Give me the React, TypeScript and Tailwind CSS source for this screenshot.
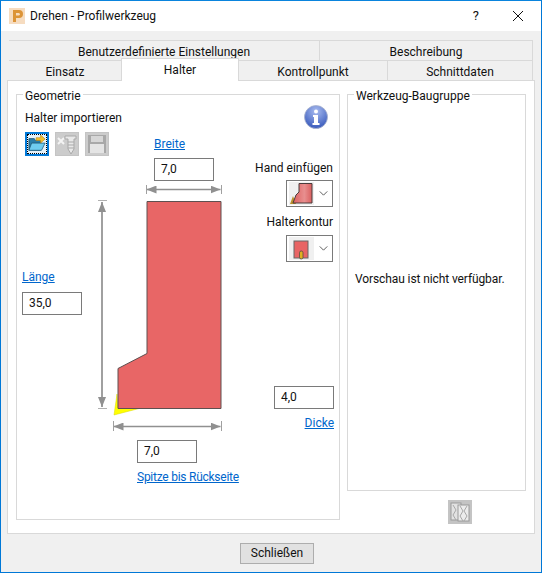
const font = { fontFamily: 'Roboto, "Noto Sans", sans-serif' };

const Tab = ({ label, className }: { label: string; className: string }) => (
  <div className={`flex items-center justify-center border-t border-[#d9d9d9] bg-[#f0f0f0] ${className}`}>{label}</div>
);

const ToolButton = ({ children, active }: { children: React.ReactNode; active?: boolean }) => (
  <div className={active ? "w-6 h-6 bg-[#0078d7] p-[2px]" : "w-6 h-6 bg-[#cccccc] border border-[#c4c4c4]"}>
    {children}
  </div>
);

const FolderIcon = () => (
  <div className="w-5 h-5 border border-dotted border-black bg-[#e6f2fa]">
    <svg viewBox="0 0 20 20" className="w-full h-full">
      <path d="M1 4h6l1 2h6v11H1z" fill="#2a7ea8" stroke="#17506e" strokeWidth="0.8" />
      <path d="M1 17l3-8h15l-4 8z" fill="#6fcdf0" stroke="#17506e" strokeWidth="0.8" />
      <path d="M9 3h5V0l5 4.5L14 9V6H9z" fill="#f3c02c" stroke="#b07c10" strokeWidth="0.6" />
    </svg>
  </div>
);

const ScrewIcon = () => (
  <svg viewBox="0 0 22 22" className="w-full h-full">
    <path d="M2 5l6 6M8 5l-6 6" stroke="#f4f4f4" strokeWidth="2" />
    <path d="M9 3h11v3h-2v10l-3 5-3-5V6H9z" fill="#e8e8e8" stroke="#a9a9a9" strokeWidth="1" />
    <path d="M12 9h6M12 12h6M12 15h6" stroke="#a9a9a9" strokeWidth="1" />
  </svg>
);

const SaveIcon = () => (
  <svg viewBox="0 0 22 22" className="w-full h-full">
    <rect x="2" y="2" width="18" height="18" fill="#a8a8a8" />
    <rect x="5" y="3" width="12" height="6" fill="#d6d6d6" />
    <rect x="4" y="11" width="14" height="9" fill="#e4e4e4" />
  </svg>
);

const InfoIcon = () => (
  <svg viewBox="0 0 24 24" className="w-6 h-6">
    <defs>
      <radialGradient id="infoFill" cx="50%" cy="25%" r="80%">
        <stop offset="0%" stopColor="#a9bcf0" />
        <stop offset="100%" stopColor="#2f52b8" />
      </radialGradient>
    </defs>
    <circle cx="12" cy="12" r="11.5" fill="url(#infoFill)" stroke="#aab2cc" strokeWidth="0.8" />
    <circle cx="12" cy="6.5" r="2" fill="#fff" />
    <path d="M9 10h5v8h1.5v2h-7v-2H10v-6H9z" fill="#fff" />
  </svg>
);

const Chevron = () => (
  <svg viewBox="0 0 10 6" className="w-[9px] h-[5px]">
    <path d="M0.5 0.5L5 5l4.5-4.5" fill="none" stroke="#505050" strokeWidth="1.1" />
  </svg>
);

const Combo = ({ children }: { children: React.ReactNode }) => (
  <div className="w-[47px] h-[27px] bg-white border border-[#7a7a7a] flex items-center pl-[2px] pr-[4px] justify-between">
    <div className="w-[25px] h-[23px] bg-[#f0f0f0]">{children}</div>
    <Chevron />
  </div>
);

const TextBox = ({ value, className }: { value: string; className: string }) => (
  <div className={`absolute w-[60px] h-[23px] bg-white border border-[#7a7a7a] pl-[6px] leading-[21px] ${className}`}>
    {value}
  </div>
);

const DimLink = ({ label, className }: { label: string; className: string }) => (
  <a className={`absolute text-[#0066cc] underline whitespace-nowrap leading-4 ${className}`}>{label}</a>
);

const Diagram = () => (
  <svg viewBox="0 0 140 250" className="absolute left-[78px] top-[87px] w-[140px] h-[250px]">
    <defs>
      <marker id="head" markerWidth="10" markerHeight="8" refX="10" refY="4" orient="auto-start-reverse" markerUnits="userSpaceOnUse">
        <path d="M0 0L10 4L0 8z" fill="#909090" />
      </marker>
    </defs>
    {/* origin of the drawing is x=95, y=182 of the page */}
    <path d="M19 233l3-21 1 14h23z" fill="#ffff00" stroke="#d8d800" strokeWidth="0.5" />
    <path d="M52 19.5h74v207H23v-40l29-15z" fill="#e86666" stroke="#5e5050" strokeWidth="1" />
    <path d="M7 20v205" stroke="#a0a0a0" strokeWidth="2" markerStart="url(#head)" markerEnd="url(#head)" />
    <path d="M3 18.5h9M3 226.5h9" stroke="#b0b0b0" strokeWidth="1" />
    <path d="M51.5 7.5h74" stroke="#909090" strokeWidth="1.5" markerStart="url(#head)" markerEnd="url(#head)" />
    <path d="M51.5 3v9M126.5 3v9" stroke="#a0a0a0" strokeWidth="1" />
    <path d="M18.5 244.5h107" stroke="#909090" strokeWidth="1.5" markerStart="url(#head)" markerEnd="url(#head)" />
    <path d="M18.5 239v10M126.5 239v10" stroke="#a0a0a0" strokeWidth="1" />
  </svg>
);

export default function App() {
  return (
    <div style={font} className="w-[542px] h-[573px] flex flex-col bg-[#f0f0f0] border border-[#0078d7] border-t-[#0a84dd] text-[12px] text-[#111]">
      <div className="h-[30px] bg-white flex items-center shrink-0">
        <svg viewBox="0 0 16 16" className="w-4 h-4 ml-[8px]">
          <rect width="16" height="16" fill="#f6dcc0" />
          <path d="M4 2h6a4 4 0 0 1 0 8H7v4H4z" fill="#dc9437" />
          <path d="M7 5h2.6a1.2 1.2 0 0 1 0 2.4H7z" fill="#f6dcc0" />
        </svg>
        <span className="ml-[5px] text-[12px]">Drehen - Profilwerkzeug</span>
        <span className="ml-auto text-[13px] mr-[34px]">?</span>
        <svg viewBox="0 0 10 10" className="w-[10px] h-[10px] mr-[18px]">
          <path d="M0 0l10 10M10 0L0 10" stroke="#111" strokeWidth="1" />
        </svg>
      </div>

      <div className="flex-1 flex flex-col px-[6px] pt-[9px]">
        <div className="flex pl-[2px] h-5 relative">
          <Tab label="Benutzerdefinierte Einstellungen" className="w-[311px] border-r pt-[2px]" />
          <Tab label="Beschreibung" className="w-[213px] border-r pt-[2px]" />
        </div>
        <div className="flex pl-[2px] h-5 relative">
          <Tab label="Einsatz" className="w-[112px] pt-[3px]" />
          <Tab label="Halter" className="w-[118px] -mt-[2px] h-[23px] border-x relative z-10 !bg-white" />
          <Tab label="Kontrollpunkt" className="w-[149px] pt-[2px] border-r" />
          <Tab label="Schnittdaten" className="w-[145px] pt-[2px] border-r" />
        </div>

        <div className="h-[454px] bg-white border border-[#d9d9d9] flex pl-[8px] pt-[13px] gap-[7px]">
          <div className="relative w-[324px] h-[426px] border border-[#d9d9d9] pl-[8px] pt-[15px]">
            <span className="absolute left-[6px] -top-[7px] bg-white px-[2px] leading-4">Geometrie</span>
            <div className="leading-4">Halter importieren</div>
            <div className="flex gap-[6px] mt-[6px]">
              <ToolButton active><FolderIcon /></ToolButton>
              <ToolButton><ScrewIcon /></ToolButton>
              <ToolButton><SaveIcon /></ToolButton>
            </div>
            <div className="absolute left-[287px] top-[10px]"><InfoIcon /></div>

            <Diagram />
            <DimLink label="Breite" className="left-[137px] top-[41px]" />
            <TextBox value="7,0" className="left-[137px] top-[63px]" />
            <DimLink label="Länge" className="left-[5px] top-[174px]" />
            <TextBox value="35,0" className="left-[5px] top-[197px]" />
            <TextBox value="7,0" className="left-[120px] top-[345px]" />
            <DimLink label="Spitze bis Rückseite" className="left-[120px] top-[374px] tracking-[-0.25px]" />
            <TextBox value="4,0" className="left-[257px] top-[291px]" />
            <DimLink label="Dicke" className="right-[5px] top-[320px]" />

            <div className="absolute left-[269px] top-[65px] w-[47px] flex flex-col items-end">
              <span className="leading-4 whitespace-nowrap">Hand einfügen</span>
              <div className="mt-[4px]">
                <Combo>
                  <svg viewBox="0 0 25 23" className="w-full h-full">
                    <defs>
                      <linearGradient id="handFill" x1="0" x2="1" y1="0" y2="0">
                        <stop offset="0%" stopColor="#dd5f5f" />
                        <stop offset="60%" stopColor="#e88f8f" />
                        <stop offset="100%" stopColor="#d95f5f" />
                      </linearGradient>
                    </defs>
                    <path d="M1 22l3-8 3 8z" fill="#b9902c" />
                    <path d="M10 1.5h13v19.5H4l3-8 3-3z" fill="url(#handFill)" stroke="#4b3b3b" strokeWidth="1" />
                  </svg>
                </Combo>
              </div>
              <span className="leading-4 whitespace-nowrap mt-[7px]">Halterkontur</span>
              <div className="mt-[5px]">
                <Combo>
                  <svg viewBox="0 0 25 23" className="w-full h-full">
                    <rect x="5" y="4" width="14" height="17" fill="#e86464" stroke="#666" strokeWidth="1" />
                    <rect x="10.5" y="14" width="3.5" height="8" rx="1.7" fill="#e0b020" stroke="#444" strokeWidth="0.7" />
                  </svg>
                </Combo>
              </div>
            </div>
          </div>

          <div className="flex flex-col">
            <div className="relative w-[179px] h-[397px] border border-[#d9d9d9] flex items-center pl-[7px] pb-[28px]">
              <span className="absolute left-[6px] -top-[7px] bg-white px-[2px] leading-4">Werkzeug-Baugruppe</span>
              <span className="tracking-[-0.1px]">Vorschau ist nicht verfügbar.</span>
            </div>
            <div className="w-6 h-6 mt-[9px] ml-[101px] bg-[#c4c4c4] p-[2px]">
              <svg viewBox="0 0 20 20" className="w-full h-full">
                <rect x="1" y="1" width="10" height="17" fill="#e2e2e2" stroke="#9a9a9a" strokeWidth="1" />
                <rect x="8" y="3" width="11" height="16" fill="#ececec" stroke="#9a9a9a" strokeWidth="1" />
                <path d="M3 3l3 5-3 5 3 5M10 4l3 5-3 5 3 5M17 4l-3 5 3 5-3 5" fill="none" stroke="#a8a8a8" strokeWidth="1" />
              </svg>
            </div>
          </div>
        </div>

        <div className="flex-1 flex items-center justify-center pl-[12px]">
          <div className="w-[74px] h-[21px] bg-[#e1e1e1] border border-[#adadad] flex items-center justify-center">
            Schließen
          </div>
        </div>
      </div>
    </div>
  );
}
